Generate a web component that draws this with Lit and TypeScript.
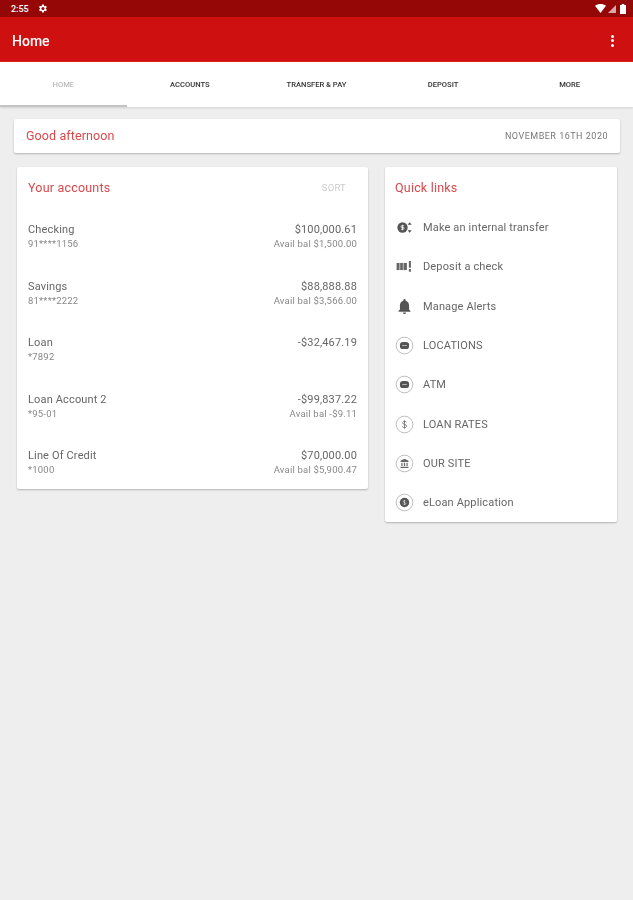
import { LitElement, html, css, svg } from "lit";
import { customElement } from "lit/decorators.js";

const accounts = [
  { name: "Checking", num: "91****1156", amt: "$100,000.61", avail: "Avail bal $1,500.00" },
  { name: "Savings", num: "81****2222", amt: "$88,888.88", avail: "Avail bal $3,566.00" },
  { name: "Loan", num: "*7892", amt: "-$32,467.19", avail: "" },
  { name: "Loan Account 2", num: "*95-01", amt: "-$99,837.22", avail: "Avail bal -$9.11" },
  { name: "Line Of Credit", num: "*1000", amt: "$70,000.00", avail: "Avail bal $5,900.47" },
];

const ring = svg`<circle cx="12" cy="12" r="10.500" fill="none" stroke="#888" stroke-width="0.7"/>`;
const icons = {
  transfer: svg`<circle cx="9.500" cy="12" r="6.500" fill="#555"/><path d="M9.500 8.500v7M11.400 9.800H8.600a1.100 1.100 0 0 0 0 2.200h1.800a1.100 1.100 0 0 1 0 2.200H7.600" stroke="#fff" stroke-width="1" fill="none"/><path d="M18.500 5.500l2.600 3h-5.200zM18.500 18.500l-2.600-3h5.200z" fill="#555"/>`,
  deposit: svg`<path d="M2 7.500h13v9H2z" fill="#666"/><path d="M6 7.500v9M10.500 7.500v9" stroke="#ddd" stroke-width="1"/><path d="M17.500 5h2.600v8.500h-2.600zM17.500 15h2.600v3.500h-2.600z" fill="#666"/>`,
  bell: svg`<path d="M12 21.500a2 2 0 0 0 2-2h-4a2 2 0 0 0 2 2zM17.800 15.800v-5c0-3-1.500-5.400-4.300-6.100V4a1.500 1.500 0 0 0-3 0v.7c-2.800.7-4.300 3.100-4.300 6.100v5L4.500 17.600v.9h15v-.9z" fill="#555"/>`,
  chat: svg`${ring}<rect x="6.200" y="7.500" width="11.600" height="9" rx="4" fill="#555"/><path d="M9 12h6" stroke="#ccc" stroke-width="1"/>`,
  dollar: svg`${ring}<path d="M14.400 9.400c-.3-1-1.200-1.500-2.400-1.500-1.400 0-2.400.7-2.400 1.900 0 2.700 5 1.400 5 4.200 0 1.300-1.100 2-2.600 2-1.400 0-2.400-.7-2.600-1.800M12 6.700v10.600" stroke="#666" stroke-width="1" fill="none"/>`,
  bank: svg`${ring}<path d="M12 6l5 2.600v1.400H7V8.600zM8 11h1.500v4H8zM11.200 11h1.600v4h-1.600zM14.500 11H16v4h-1.500zM7 16h10v1.800H7z" fill="#666"/>`,
  loan: svg`${ring}<circle cx="12" cy="12" r="6" fill="#555"/><path d="M13.600 10.400c-.3-.6-.9-.9-1.600-.9-.9 0-1.600.5-1.600 1.200 0 1.700 3.300.9 3.300 2.700 0 .8-.7 1.200-1.700 1.200-.8 0-1.500-.4-1.700-1.100M12 8.800v6.400" stroke="#ddd" stroke-width=".8" fill="none"/>`,
};

const links: [keyof typeof icons, string][] = [
  ["transfer", "Make an internal transfer"],
  ["deposit", "Deposit a check"],
  ["bell", "Manage Alerts"],
  ["chat", "LOCATIONS"],
  ["chat", "ATM"],
  ["dollar", "LOAN RATES"],
  ["bank", "OUR SITE"],
  ["loan", "eLoan Application"],
];

const tabs = ["HOME", "ACCOUNTS", "TRANSFER & PAY", "DEPOSIT", "MORE"];

@customElement("app-root")
export class AppRoot extends LitElement {
  static styles = css`
    :host { display: block; width: 633px; height: 900px; background: #eeeeee; font-family: Roboto, "Liberation Sans", sans-serif; overflow: hidden; }
    * { box-sizing: border-box; }
    .root { filter: blur(0.35px); }
    .status { height: 17px; background: #950707; color: #fff; display: flex; align-items: center; padding: 0 7px 0 11px; font-size: 9px; font-weight: 500; }
    .status .gear { margin-left: 8px; }
    .status .right { margin-left: auto; display: flex; align-items: center; gap: 2px; }
    .appbar { height: 45px; background: #cf1010; color: #fff; display: flex; align-items: center; justify-content: space-between; padding: 3px 19px 0 12px; font-size: 14px; font-weight: 500; border-bottom: 1px solid #e02020; }
    .dots { display: flex; flex-direction: column; gap: 1.500px; }
    .dots i { width: 3px; height: 3px; border-radius: 50%; background: #fff; display: block; }
    .tabs { height: 45px; background: #fff; display: flex; box-shadow: 0 1px 2px rgba(0,0,0,.12); }
    .tab { flex: 1 1 0; display: flex; align-items: center; justify-content: center; padding-top: 2px; font-size: 7.600px; font-weight: 500; color: #333; border-bottom: 2px solid transparent; white-space: nowrap; }
    .tab.on { color: #aaa; font-weight: 400; border-bottom-color: #c4c4c4; }
    .main { padding: 12px 13px 0 14px; }
    .card { background: #fff; border-radius: 2px; box-shadow: 0 1px 2px rgba(0,0,0,.25); }
    .greet { height: 34px; display: flex; align-items: center; justify-content: space-between; padding: 0 12px 1px; }
    .greet .hello { color: #d9484c; font-size: 12.500px; letter-spacing: .1px; }
    .greet .date { color: #777; font-size: 9px; letter-spacing: .5px; }
    .cols { display: flex; align-items: flex-start; gap: 17px; margin: 14px 3px 0; }
    .accounts { width: 351px; height: 322px; padding: 0 11px; }
    .quick { width: 232px; height: 355px; padding: 0 10px; }
    .title { height: 41px; display: flex; align-items: center; justify-content: space-between; color: #d9484c; font-size: 12.500px; letter-spacing: .2px; }
    .sort { color: #ccc; font-size: 9.500px; margin-right: 11px; }
    .acct-list { display: flex; flex-direction: column; gap: 28.500px; margin-top: 15px; }
    .acct { height: 28px; display: flex; justify-content: space-between; color: #666; }
    .acct > div:last-child { text-align: right; }
    .line1 { font-size: 11px; line-height: 14px; letter-spacing: .15px; }
    .line2 { font-size: 9.500px; line-height: 14px; color: #888; letter-spacing: .2px; }
    .links { display: flex; flex-direction: column; }
    .link { height: 39.300px; display: flex; align-items: center; gap: 9px; color: #666; font-size: 11px; letter-spacing: .15px; }
    .link svg { width: 19px; height: 19px; flex: none; }
  `;

  render() {
    return html`
      <div class="root">
      <div class="status">
        <span>2:55</span>
        <svg class="gear" width="11" height="11" viewBox="0 0 24 24"><path fill="#fff" d="M19.400 13a7.500 7.500 0 0 0 0-2l2.100-1.600-2-3.500-2.500 1a7.500 7.500 0 0 0-1.700-1L15 3.300h-4l-.4 2.600a7.500 7.500 0 0 0-1.700 1l-2.500-1-2 3.500L6.500 11a7.500 7.500 0 0 0 0 2l-2.100 1.600 2 3.500 2.500-1a7.500 7.500 0 0 0 1.700 1l.4 2.600h4l.4-2.600a7.500 7.500 0 0 0 1.700-1l2.500 1 2-3.500zM13 15.500a3.500 3.500 0 1 1 0-7 3.500 3.500 0 0 1 0 7z"/></svg>
        <span class="right">
          <svg width="11" height="9" viewBox="0 0 11 9"><path fill="#fff" d="M0 1.800C3-.6 8-.6 11 1.800L5.500 9z"/></svg>
          <svg width="8" height="8" viewBox="0 0 8 8"><path fill="#fff" opacity=".65" d="M8 0v8H0z"/></svg>
          <svg width="6" height="10" viewBox="0 0 6 10" style="margin-left:2px"><path fill="#fff" d="M1.800 0h2.400v1H6v9H0V1h1.800z"/></svg>
        </span>
      </div>
      <div class="appbar"><span>Home</span><span class="dots"><i></i><i></i><i></i></span></div>
      <div class="tabs">${tabs.map((t, i) => html`<div class="tab ${i === 0 ? "on" : ""}">${t}</div>`)}</div>
      <div class="main">
        <div class="card greet"><span class="hello">Good afternoon</span><span class="date">NOVEMBER 16TH 2020</span></div>
        <div class="cols">
          <div class="card accounts">
            <div class="title"><span>Your accounts</span><span class="sort">SORT</span></div>
            <div class="acct-list">
              ${accounts.map(a => html`<div class="acct">
                <div><div class="line1">${a.name}</div><div class="line2">${a.num}</div></div>
                <div><div class="line1">${a.amt}</div><div class="line2">${a.avail}</div></div>
              </div>`)}
            </div>
          </div>
          <div class="card quick">
            <div class="title"><span>Quick links</span></div>
            <div class="links">
              ${links.map(([ic, label]) => html`<div class="link"><svg viewBox="0 0 24 24">${icons[ic]}</svg><span>${label}</span></div>`)}
            </div>
          </div>
        </div>
      </div>
      </div>
    `;
  }
}
